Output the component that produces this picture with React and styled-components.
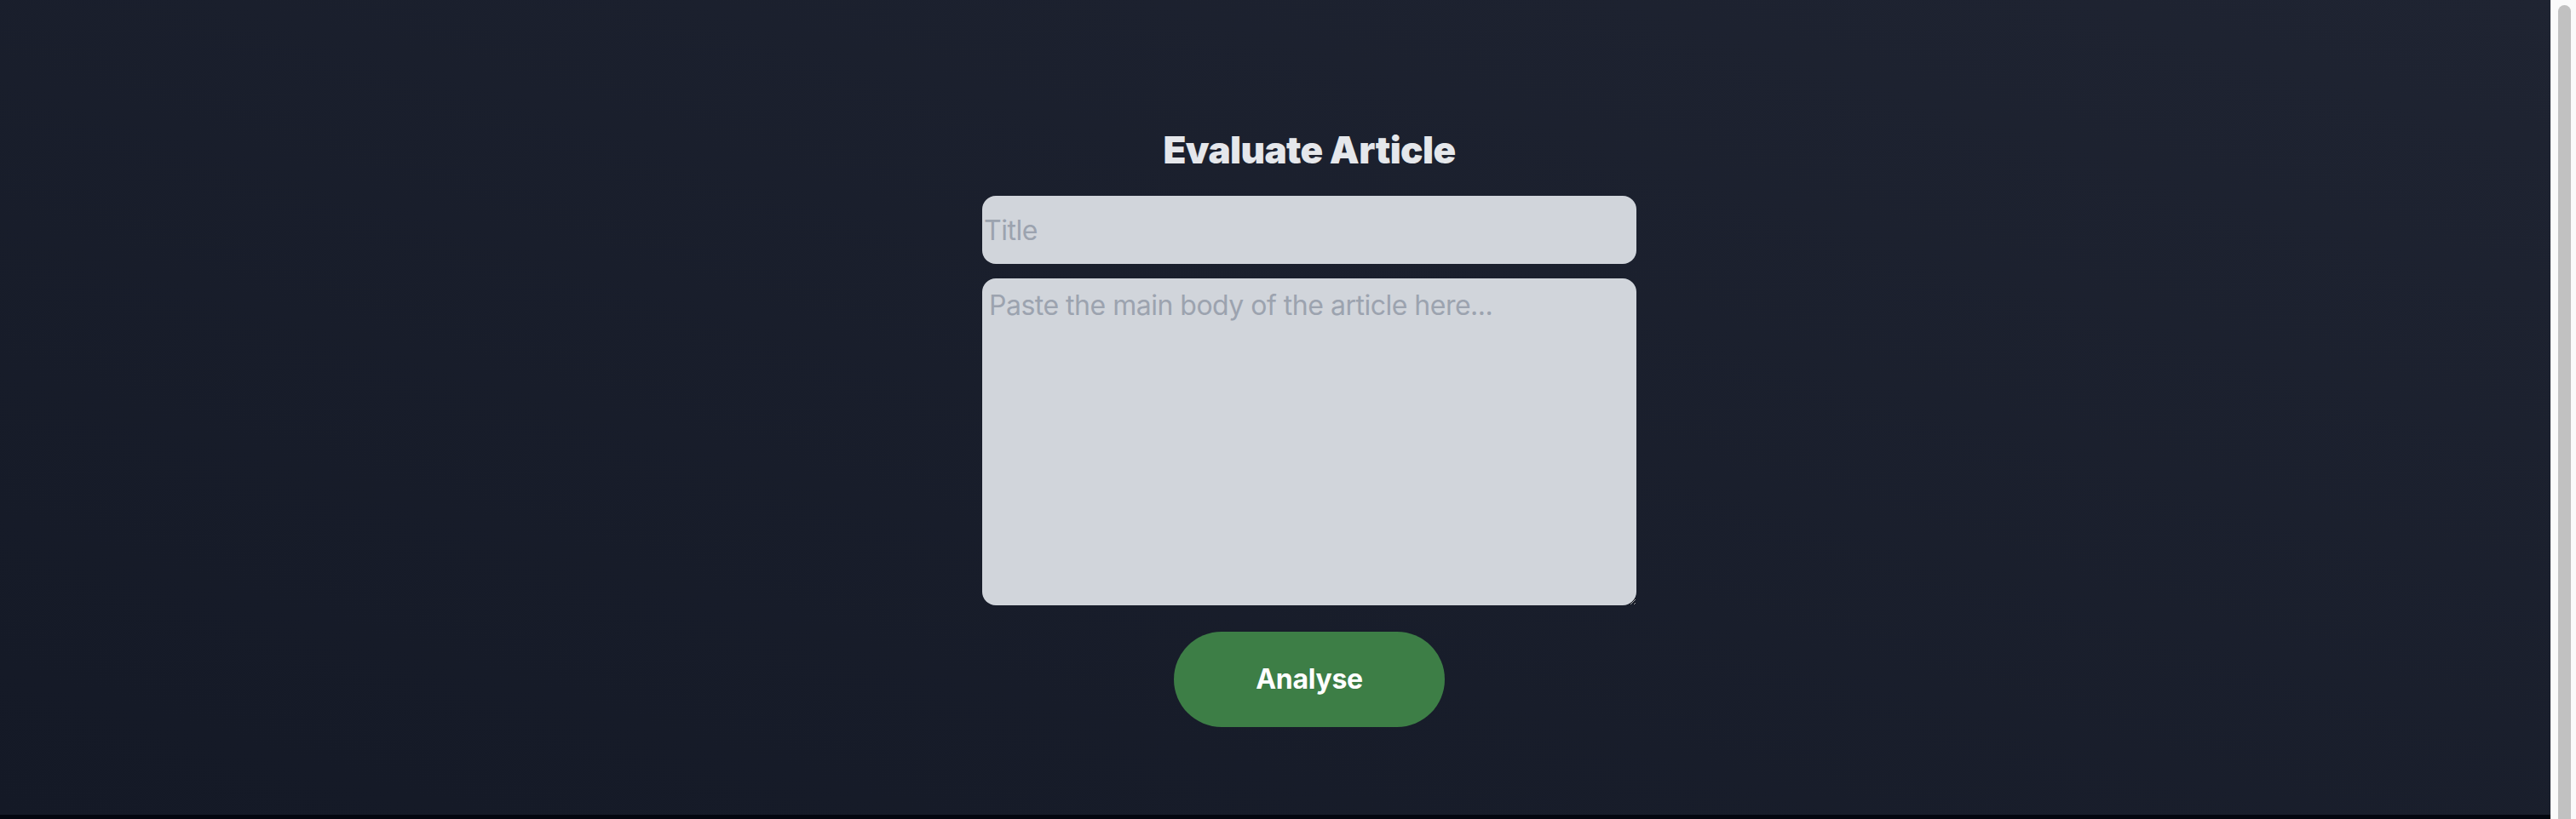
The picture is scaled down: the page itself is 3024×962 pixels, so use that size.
import React, { useState } from "react";
import styled, { createGlobalStyle } from "styled-components";

const GlobalStyle = createGlobalStyle`
  html, body {
    margin: 0;
    padding: 0;
    height: 100%;
    overflow: hidden;
    background: #03060f;
  }

  body {
    font-family: Inter, "Noto Sans", sans-serif;
  }
`;

const App = () => {
  const [title, setTitle] = useState("");
  const [body, setBody] = useState("");

  return (
    <>
      <GlobalStyle />
      <Shell>
        <Column>
          <Page>
            <Heading>Evaluate Article</Heading>
            <Form onSubmit={(e) => e.preventDefault()}>
              <TitleInput
                type="text"
                placeholder="Title"
                value={title}
                onChange={(e) => setTitle(e.target.value)}
              />
              <BodyInput
                placeholder="Paste the main body of the article here..."
                value={body}
                onChange={(e) => setBody(e.target.value)}
              />
              <AnalyseButton type="submit">Analyse</AnalyseButton>
            </Form>
          </Page>
          <Footer />
        </Column>
        <ScrollTrack>
          <ScrollThumb />
        </ScrollTrack>
      </Shell>
    </>
  );
};

const Shell = styled.div`
  display: flex;
  height: 962px;
`;

const Column = styled.div`
  display: flex;
  flex-direction: column;
  flex: 1;
`;

const Page = styled.main`
  display: flex;
  flex-direction: column;
  align-items: center;
  box-sizing: border-box;
  height: 957px;
  padding: 144px 0 0 80px;
  background: linear-gradient(to top right, #141926, #1f2432);
`;

const Footer = styled.div`
  flex: 1;
  background: #03060f;
`;

const ScrollTrack = styled.div`
  display: flex;
  box-sizing: border-box;
  width: 30px;
  padding: 6px 6px 0 8px;
  background: #fafafa;
  border-left: 1px solid #ececec;
`;

const ScrollThumb = styled.div`
  flex: 1;
  background: #c1c1c1;
  border-radius: 8px 8px 0 0;
`;

const Heading = styled.h1`
  margin: 0 0 22px 0;
  font-size: 44px;
  line-height: 64px;
  font-weight: 900;
  letter-spacing: -0.6px;
  color: #e5e7eb;
`;

const Form = styled.form`
  display: flex;
  flex-direction: column;
  align-items: center;
  gap: 17px;
  width: 768px;
`;

const fieldStyles = `
  box-sizing: border-box;
  width: 100%;
  border: none;
  border-radius: 16px;
  background: #d1d5db;
  color: #111827;
  font-family: Inter, "Noto Sans", sans-serif;
  font-size: 32px;
  letter-spacing: -0.5px;
  outline: none;

  &::placeholder {
    color: #9ca3af;
  }
`;

const TitleInput = styled.input`
  ${fieldStyles}
  height: 80px;
  padding: 0 2px;
`;

const BodyInput = styled.textarea`
  ${fieldStyles}
  display: block;
  height: 384px;
  padding: 8px;
  line-height: 48px;
`;

const AnalyseButton = styled.button`
  margin-top: 14px;
  padding: 32px 96px;
  border: none;
  border-radius: 9999px;
  background: #3d7e46;
  color: #ffffff;
  font-family: Inter, "Noto Sans", sans-serif;
  font-size: 32px;
  line-height: 48px;
  font-weight: 700;
  letter-spacing: -0.3px;
  cursor: pointer;
`;

export default App;
